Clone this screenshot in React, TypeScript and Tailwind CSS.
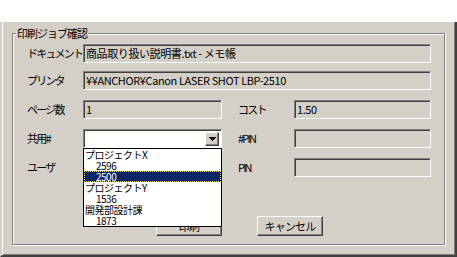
const font = { fontFamily: '"Noto Sans CJK JP", "Liberation Sans", sans-serif' };

const Sunken = ({ text, width, white }: { text?: string; width: string; white?: boolean }) => (
  <div
    className={`${width} h-[19px] border border-t-[#808080] border-l-[#808080] border-r-white border-b-white shadow-[inset_1px_1px_0_#404040] ${
      white ? 'bg-white' : 'bg-[#d4d0c8]'
    } pl-[2px] pt-[2px] text-[11px] leading-[13px] text-black whitespace-nowrap overflow-hidden tracking-[-0.4px]`}
  >
    {text}
  </div>
);

const Button = ({ label }: { label: string }) => (
  <div className="w-[66px] h-[20px] border border-t-white border-l-white border-r-[#404040] border-b-[#404040] shadow-[inset_-1px_-1px_0_#808080] bg-[#d4d0c8] flex items-center justify-center text-[11px] leading-none text-black tracking-[-0.8px]">
    {label}
  </div>
);

const Label = ({ text, width }: { text: string; width: string }) => (
  <div className={`${width} text-[11px] leading-none text-black tracking-[-1.8px] whitespace-nowrap`}>{text}</div>
);

const items = [
  { text: 'プロジェクトX', indent: false },
  { text: '2596', indent: true },
  { text: '2500', indent: true, selected: true },
  { text: 'プロジェクトY', indent: false },
  { text: '1536', indent: true },
  { text: '開発部設計課', indent: false },
  { text: '1873', indent: true },
];

export default function App() {
  return (
    <div className="w-[457px] h-[257px] bg-white flex flex-col overflow-hidden" style={font}>
      <div className="h-[22px] shrink-0 bg-white" />
      <div className="flex-1 bg-[#d4d0c8] border-l-2 border-l-[#d4d0c8] border-r-2 border-r-[#404040] border-b-2 border-b-[#404040] shadow-[inset_1px_0_0_#ffffff,inset_-1px_-1px_0_#808080]">
        <div className="relative ml-[10px] mt-[11px] w-[433px] h-[212px] border border-[#808080] shadow-[1px_1px_0_#ffffff,inset_1px_1px_0_#ffffff]">
          <div className="absolute left-[3px] top-[-7px] bg-[#d4d0c8] px-[1px] text-[11px] leading-[13px] text-black tracking-[-1px]">
            印刷ジョブ確認
          </div>

          <div className="pl-[14px] pt-[10px] flex flex-col">
            <div className="flex items-center">
              <Label text="ドキュメント" width="w-[56px]" />
              <Sunken width="w-[348px]" text="商品取り扱い説明書.txt - メモ帳" />
            </div>
            <div className="flex items-center mt-[8px]">
              <Label text="プリンタ" width="w-[56px]" />
              <Sunken width="w-[348px]" text="¥¥ANCHOR¥Canon LASER SHOT LBP-2510" />
            </div>
            <div className="flex items-center mt-[10px]">
              <Label text="ページ数" width="w-[56px]" />
              <Sunken width="w-[139px]" text="1" />
              <div className="w-[16px]" />
              <Label text="コスト" width="w-[56px]" />
              <Sunken width="w-[137px]" text="1.50" />
            </div>
            <div className="flex items-center mt-[10px]">
              <Label text="共用#" width="w-[56px]" />
              <div className="relative w-[139px] h-[19px] z-10">
                <div className="w-full h-full border border-t-[#808080] border-l-[#808080] border-r-white border-b-white shadow-[inset_1px_1px_0_#404040] bg-white flex justify-end items-center pr-[2px]">
                  <div className="w-[14px] h-[14px] border border-t-white border-l-white border-r-[#404040] border-b-[#404040] shadow-[inset_-1px_-1px_0_#808080] bg-[#d4d0c8] flex items-center justify-center">
                    <svg width="7" height="4" viewBox="0 0 7 4">
                      <path d="M0 0h7v1H0zM1 1h5v1H1zM2 2h3v1H2zM3 3h1v1H3z" fill="#000" />
                    </svg>
                  </div>
                </div>
                <div className="absolute left-0 top-[19px] w-[139px] h-[79px] bg-white border border-black flex flex-col">
                  {items.map((it) => (
                    <div
                      key={it.text}
                      className={`h-[11px] leading-[11px] text-[10px] whitespace-nowrap ${it.indent ? 'pl-[12px]' : 'pl-[1px]'} ${
                        it.selected
                          ? 'bg-[#0a246a] text-white outline-1 outline-dotted outline-[#e8d870] -outline-offset-1'
                          : 'text-black'
                      } tracking-[-0.5px]`}
                    >
                      {it.text}
                    </div>
                  ))}
                </div>
              </div>
              <div className="w-[16px]" />
              <Label text="#PIN" width="w-[56px]" />
              <Sunken width="w-[137px]" />
            </div>
            <div className="flex items-center mt-[10px]">
              <Label text="ユーザ" width="w-[56px]" />
              <div className="w-[139px]" />
              <div className="w-[16px]" />
              <Label text="PIN" width="w-[56px]" />
              <Sunken width="w-[137px]" />
            </div>
            <div className="flex mt-[39px] ml-[129px] gap-[35px]">
              <Button label="印刷" />
              <Button label="キャンセル" />
            </div>
          </div>
        </div>
      </div>
    </div>
  );
}
